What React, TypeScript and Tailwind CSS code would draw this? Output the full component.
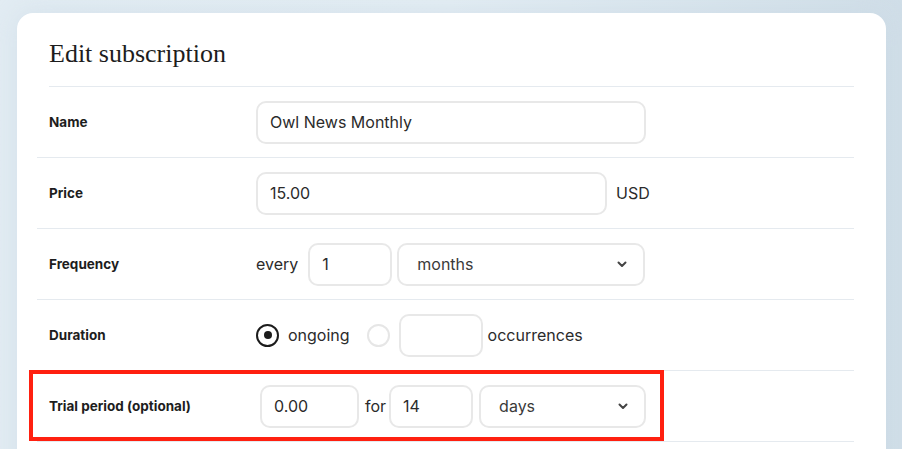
import React from "react";

const sans = "font-['Inter','Noto_Sans',sans-serif]";

function Chevron() {
  return (
    <svg width="10" height="7" viewBox="0 0 10 7" fill="none">
      <path d="M1.5 1.5 L5 5 L8.5 1.5" stroke="#444" strokeWidth="2" strokeLinecap="round" strokeLinejoin="round" />
    </svg>
  );
}

function Field({ w, children, className = "" }: { w: string; children?: React.ReactNode; className?: string }) {
  return (
    <div
      className={`flex h-[43px] items-center rounded-[10px] border-2 border-[#e8e8e8] bg-white pl-3 text-[16px] text-[#2b2b2b] ${w} ${className}`}
    >
      {children}
    </div>
  );
}

function Select({ w, value }: { w: string; value: string }) {
  return (
    <div
      className={`flex h-[43px] items-center justify-between rounded-[10px] border-2 border-[#e8e8e8] bg-white pl-[18px] pr-[16px] text-[16px] text-[#3a3a3a] ${w}`}
    >
      <span>{value}</span>
      <Chevron />
    </div>
  );
}

function Radio({ checked }: { checked?: boolean }) {
  return checked ? (
    <div className="flex h-[23px] w-[23px] items-center justify-center rounded-full border-2 border-[#1c1c1c]">
      <div className="h-[8px] w-[8px] rounded-full bg-[#1c1c1c]" />
    </div>
  ) : (
    <div className="h-[23px] w-[23px] rounded-full border-2 border-[#e6e6e6]" />
  );
}

function Row({ label, children, last }: { label: string; children: React.ReactNode; last?: boolean }) {
  return (
    <div className="relative flex h-[71px] items-center border-b border-[#e5eaef]">
      <div className="w-[219px] shrink-0 pl-3 text-[13.5px] font-bold text-[#1d1d1d]">{label}</div>
      <div className="flex items-center text-[16px] text-[#2b2b2b]">{children}</div>
      {last && (
        <div className="pointer-events-none absolute left-[-8px] top-[-1px] h-[71px] w-[635px] border-4 border-[#ff2010]" />
      )}
    </div>
  );
}

export default function App() {
  return (
    <div
      className={`h-[449px] w-[902px] overflow-hidden bg-gradient-to-r from-[#e2ecf3] via-[#e3edf4] to-[#d0dee8] pl-[17px] pt-[13px] ${sans}`}
    >
      <div className="h-[520px] w-[869px] rounded-2xl bg-white pl-[20px] pr-[32px] shadow-[0_0_24px_rgba(200,215,228,0.5)]">
        <div className="ml-3 border-b border-[#e5eaef] pb-[16px] pt-[25px]">
          <h1 className="font-['Liberation_Serif','DejaVu_Serif',serif] text-[26px] leading-[32px] text-[#1d1d1d]">
            Edit subscription
          </h1>
        </div>
        <Row label="Name">
          <Field w="w-[390px]">Owl News Monthly</Field>
        </Row>
        <Row label="Price">
          <Field w="w-[351px]">15.00</Field>
          <span className="ml-[9px]">USD</span>
        </Row>
        <Row label="Frequency">
          <span className="mr-[10px]">every</span>
          <Field w="w-[84px]">1</Field>
          <div className="ml-[5px]">
            <Select w="w-[248px]" value="months" />
          </div>
        </Row>
        <Row label="Duration">
          <Radio checked />
          <span className="ml-[9px]">ongoing</span>
          <div className="ml-[17px]">
            <Radio />
          </div>
          <Field w="w-[84px]" className="ml-[9px]" />
          <span className="ml-[5px]">occurrences</span>
        </Row>
        <Row label="Trial period (optional)" last>
          <Field w="w-[99px]" className="ml-[4px]">0.00</Field>
          <span className="ml-[6px] mr-[3px]">for</span>
          <Field w="w-[84px]">14</Field>
          <div className="ml-[6px]">
            <Select w="w-[167px]" value="days" />
          </div>
        </Row>
      </div>
    </div>
  );
}
